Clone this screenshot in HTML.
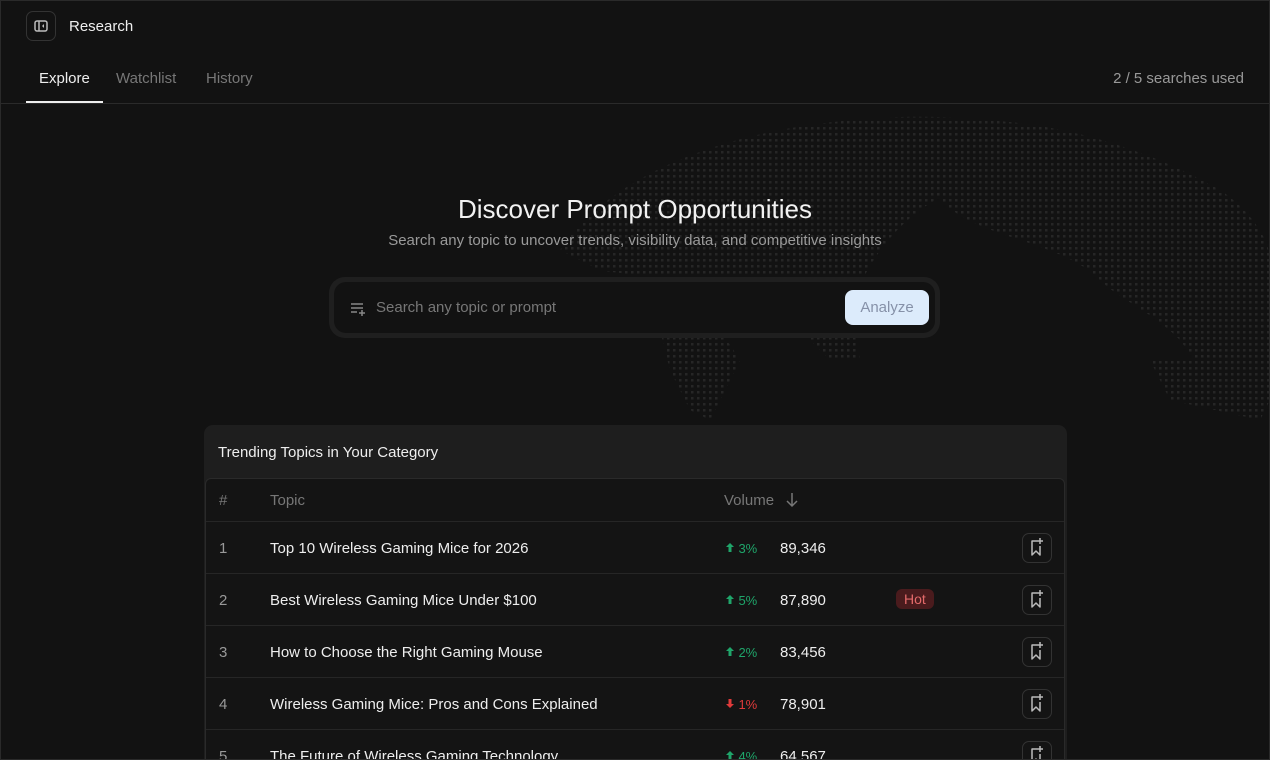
<!DOCTYPE html>
<html><head><meta charset="utf-8"><style>
*{box-sizing:border-box;margin:0;padding:0}
html,body{width:1270px;height:760px;overflow:hidden}
body{background:#121212;font-family:"Liberation Sans",sans-serif;color:#eee;position:relative}
.frame{position:absolute;left:0;top:0;width:1270px;height:760px;border:1px solid #2a2a2a;pointer-events:none}
.logo{position:absolute;left:26px;top:11px;width:30px;height:30px;border:1px solid #333;border-radius:7px}
.title{position:absolute;left:69px;top:18px;font-size:15px;color:#eee}
.tabs{position:absolute;left:0;top:58px;width:1270px;height:46px;border-bottom:1px solid #2a2a2a}
.tab{position:absolute;top:12px;font-size:15px;color:#777}
.tab.a{color:#eee}
.ul{position:absolute;left:26px;top:43px;width:77px;height:2px;background:#eee}
.used{position:absolute;right:26px;top:12px;font-size:15px;color:#999}
h1{position:absolute;left:0;width:1270px;text-align:center;top:194px;font-size:26px;font-weight:normal;color:#f2f2f2}
.sub{position:absolute;left:0;width:1270px;text-align:center;top:232px;font-size:15px;color:#9a9a9a}
.sbox{position:absolute;left:329px;top:277px;width:611px;height:61px;border-radius:16px;background:#1f1f1f;padding:5px}
.sin{width:100%;height:100%;background:#121212;border-radius:12px;position:relative}
.ph{position:absolute;left:42px;top:17px;font-size:15px;color:#777}
.btn{position:absolute;right:6px;top:8px;width:84px;height:35px;border-radius:8px;background:#dcebfb;color:#8691a8;font-size:15px;text-align:center;line-height:36px}
.card{position:absolute;left:204px;top:425px;width:863px;height:360px;background:#1e1e1e;border-radius:9px}
.ch{position:absolute;left:14px;top:19px;font-size:15px;color:#eee}
.tbl{position:absolute;left:1px;top:53px;width:860px;height:320px;background:#141414;border:1px solid #2a2a2a;border-radius:6px 6px 0 0}
.row{position:absolute;left:0;width:858px;height:52px;border-bottom:1px solid #262626;font-size:15px}
.row div{position:absolute;top:18px}
.n{left:13px;color:#999}
.t{left:64px;color:#eee}
.tr{left:518px;font-size:13px;top:19px!important}
.up{color:#1fa56a}.dn{color:#e03a3a}
.v{left:574px;color:#eee}
.hot{left:690px;top:15px!important;background:#4a1b1d;color:#e46a6a;font-size:14px;padding:2px 8px;border-radius:6px}
.bm{left:816px;top:11px!important;width:30px;height:30px;border:1px solid #333;border-radius:7px}
</style></head><body>
<svg width="1270" height="760" style="position:absolute;left:0;top:0">
<defs><pattern id="d" width="6" height="6" patternUnits="userSpaceOnUse"><rect x="1" y="1" width="2.5" height="2.5" fill="#262626"/></pattern></defs>
<g fill="url(#d)">
<path d="M560 250 C600 190 680 150 780 130 C860 115 950 112 1020 125 L1020 170 C980 170 950 190 920 210 C880 240 860 280 850 310 L860 360 L830 360 C800 330 770 300 740 280 C700 270 650 280 600 270 Z"/>
<path d="M660 330 L720 330 L740 360 L710 420 L690 410 L670 370 Z"/>
<path d="M940 120 C1050 115 1150 150 1220 190 C1250 210 1270 240 1270 260 L1270 400 C1240 390 1200 370 1180 340 C1150 310 1120 300 1100 280 C1080 260 1050 250 1020 240 C990 230 960 220 940 200 Z"/>
<path d="M1150 360 L1240 360 L1270 400 L1260 420 L1170 400 Z"/>
</g></svg>
<div class="logo"><svg width="30" height="30" style="position:absolute;left:-1px;top:-1px"><rect x="9" y="10" width="12" height="10" rx="2" fill="none" stroke="#bbb" stroke-width="1.5"/><line x1="13" y1="10" x2="13" y2="20" stroke="#bbb" stroke-width="1.5"/><path d="M18 13 L16 15 L18 17Z" fill="#bbb"/></svg></div>
<div class="title">Research</div>
<div class="tabs">
<div class="tab a" style="left:39px">Explore</div>
<div class="tab" style="left:116px">Watchlist</div>
<div class="tab" style="left:206px">History</div>
<div class="ul"></div>
<div class="used">2 / 5 searches used</div>
</div>
<h1>Discover Prompt Opportunities</h1>
<div class="sub">Search any topic to uncover trends, visibility data, and competitive insights</div>
<div class="sbox"><div class="sin">
<svg width="18" height="14" style="position:absolute;left:16px;top:20px" stroke="#888" stroke-width="1.5" fill="none"><path d="M1 2H13M1 6H13M1 10H7M12 8V14M9 11H15"/></svg>
<div class="ph">Search any topic or prompt</div>
<div class="btn">Analyze</div>
</div></div>
<div class="card">
<div class="ch">Trending Topics in Your Category</div>
<div class="tbl">
<div class="row" style="top:0;height:43px"><div class="n" style="color:#777;top:13px">#</div><div class="t" style="color:#777;top:13px">Topic</div><div style="left:518px;color:#777;top:13px">Volume</div><svg width="12" height="16" style="position:absolute;left:580px;top:13px" stroke="#777" stroke-width="1.5" fill="none"><path d="M6 1V14M1 9L6 14L11 9"/></svg></div>
<div class="row" style="top:43px"><div class="n">1</div><div class="t">Top 10 Wireless Gaming Mice for 2026</div><div class="tr up">&nbsp;&nbsp;&nbsp;&nbsp;3%</div><div class="v">89,346</div><div class="bm"></div></div>
<div class="row" style="top:95px"><div class="n">2</div><div class="t">Best Wireless Gaming Mice Under $100</div><div class="tr up">&nbsp;&nbsp;&nbsp;&nbsp;5%</div><div class="v">87,890</div><div class="hot">Hot</div><div class="bm"></div></div>
<div class="row" style="top:147px"><div class="n">3</div><div class="t">How to Choose the Right Gaming Mouse</div><div class="tr up">&nbsp;&nbsp;&nbsp;&nbsp;2%</div><div class="v">83,456</div><div class="bm"></div></div>
<div class="row" style="top:199px"><div class="n">4</div><div class="t">Wireless Gaming Mice: Pros and Cons Explained</div><div class="tr dn">&nbsp;&nbsp;&nbsp;&nbsp;1%</div><div class="v">78,901</div><div class="bm"></div></div>
<div class="row" style="top:251px"><div class="n">5</div><div class="t">The Future of Wireless Gaming Technology</div><div class="tr up">&nbsp;&nbsp;&nbsp;&nbsp;4%</div><div class="v">64,567</div><div class="bm"></div></div>
</div></div>
<svg width="1270" height="760" style="position:absolute;left:0;top:0;pointer-events:none">
<defs>
<g id="b" stroke="#bbb" stroke-width="1.5" fill="none" stroke-linejoin="round"><path d="M1037 541H1032V555L1036 551L1040 555V546M1040 538V544M1037 541H1043"/></g>
<path id="u" d="M730 543L734 547H731.5V552H728.5V547H726Z" fill="#1fa56a"/>
</defs>
<use href="#b"/><use href="#b" y="52"/><use href="#b" y="104"/><use href="#b" y="156"/><use href="#b" y="208"/>
<use href="#u"/><use href="#u" y="52"/><use href="#u" y="104"/><use href="#u" y="208"/>
<path d="M730 708L734 704H731.5V699H728.5V704H726Z" fill="#e03a3a"/>
</svg>
<div class="frame"></div>
</body></html>
